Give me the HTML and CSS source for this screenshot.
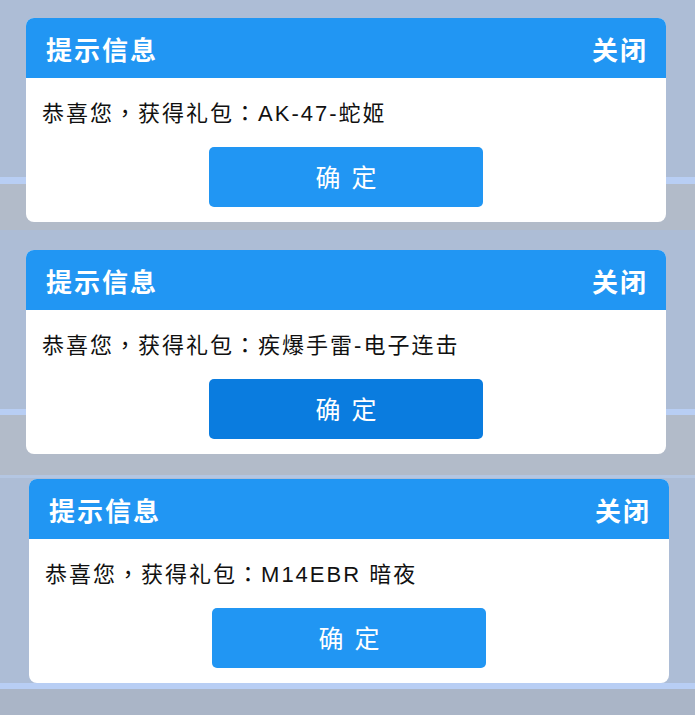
FILE: index.html
```html
<!DOCTYPE html>
<html lang="zh-CN">
<head>
    <meta charset="UTF-8">
    <meta name="viewport" content="width=device-width, initial-scale=1.0">
    <title>提示信息</title>
    <link rel="stylesheet" href="styles.css">
</head>
<body>
    <div class="shot shot-1">
        <div class="dialog">
            <div class="dialog-head">
                <span class="dialog-title">提示信息</span>
                <span class="dialog-close">关闭</span>
            </div>
            <div class="dialog-body">
                <p class="dialog-msg">恭喜您<span class="punct" lang="zh-TW">，</span>获得礼包<span class="punct" lang="zh-TW">：</span>AK-47-蛇姬</p>
                <button class="btn">确定</button>
            </div>
        </div>
    </div>

    <div class="shot shot-2">
        <div class="dialog">
            <div class="dialog-head">
                <span class="dialog-title">提示信息</span>
                <span class="dialog-close">关闭</span>
            </div>
            <div class="dialog-body">
                <p class="dialog-msg">恭喜您<span class="punct" lang="zh-TW">，</span>获得礼包<span class="punct" lang="zh-TW">：</span>疾爆手雷-电子连击</p>
                <button class="btn pressed">确定</button>
            </div>
        </div>
    </div>

    <div class="shot shot-3">
        <div class="dialog">
            <div class="dialog-head">
                <span class="dialog-title">提示信息</span>
                <span class="dialog-close">关闭</span>
            </div>
            <div class="dialog-body">
                <p class="dialog-msg">恭喜您<span class="punct" lang="zh-TW">，</span>获得礼包<span class="punct" lang="zh-TW">：</span>M14EBR 暗夜</p>
                <button class="btn">确定</button>
            </div>
        </div>
    </div>
</body>
</html>
```

FILE: styles.css
```css
* {
    box-sizing: border-box;
}

body {
    margin: 0;
    font-family: 'Liberation Sans', 'Noto Sans CJK SC', sans-serif;
    background-color: #aab5c7;
}

/* 三张截图拼接，每张背景带一条浅蓝色分隔线 */
.shot {
    width: 695px;
}

.shot-1 {
    height: 230px;
    padding: 18px 0 0 26px;
    background: linear-gradient(to bottom, #adbdd6 0, #adbdd6 177px, #b8cef4 177px, #b8cef4 184px, #b2bbc9 184px);
}

.shot-2 {
    height: 245px;
    padding: 20px 0 0 26px;
    background: linear-gradient(to bottom, #adbdd6 0, #adbdd6 179px, #b8cef4 179px, #b8cef4 185px, #b2bbc9 185px);
}

.shot-3 {
    height: 240px;
    padding: 4px 0 0 29px;
    background: linear-gradient(to bottom, #b4c6e2 0, #b4c6e2 3px, #adbdd6 3px, #adbdd6 208px, #b8cef4 208px, #b8cef4 214px, #aab5c7 214px);
}

.dialog {
    width: 640px;
    background-color: white;
    border-radius: 8px;
    overflow: hidden;
}

.dialog-head {
    height: 60px;
    padding: 0 18px 0 20px;
    display: flex;
    justify-content: space-between;
    align-items: center;
    background-color: #2196f3;
    color: white;
    font-size: 26px;
    font-weight: bold;
    letter-spacing: 2px;
}

.dialog-body {
    padding: 18px 16px 15px;
    display: flex;
    flex-direction: column;
    align-items: center;
}

.dialog-msg {
    align-self: stretch;
    margin: 0 0 21px;
    height: 30px;
    line-height: 30px;
    font-size: 22px;
    letter-spacing: 2px;
    color: #111;
}

/* 全角标点居中显示 */
.punct {
    font-family: 'Noto Sans CJK TC', sans-serif;
}

.btn {
    width: 274px;
    height: 60px;
    padding: 0 0 3px;
    border: none;
    border-radius: 5px;
    background-color: #2196f3;
    color: white;
    font-family: inherit;
    font-size: 25px;
    letter-spacing: 11px;
    text-indent: 11px;
    cursor: pointer;
}

.btn.pressed {
    background-color: #0a7cdf;
}
```
